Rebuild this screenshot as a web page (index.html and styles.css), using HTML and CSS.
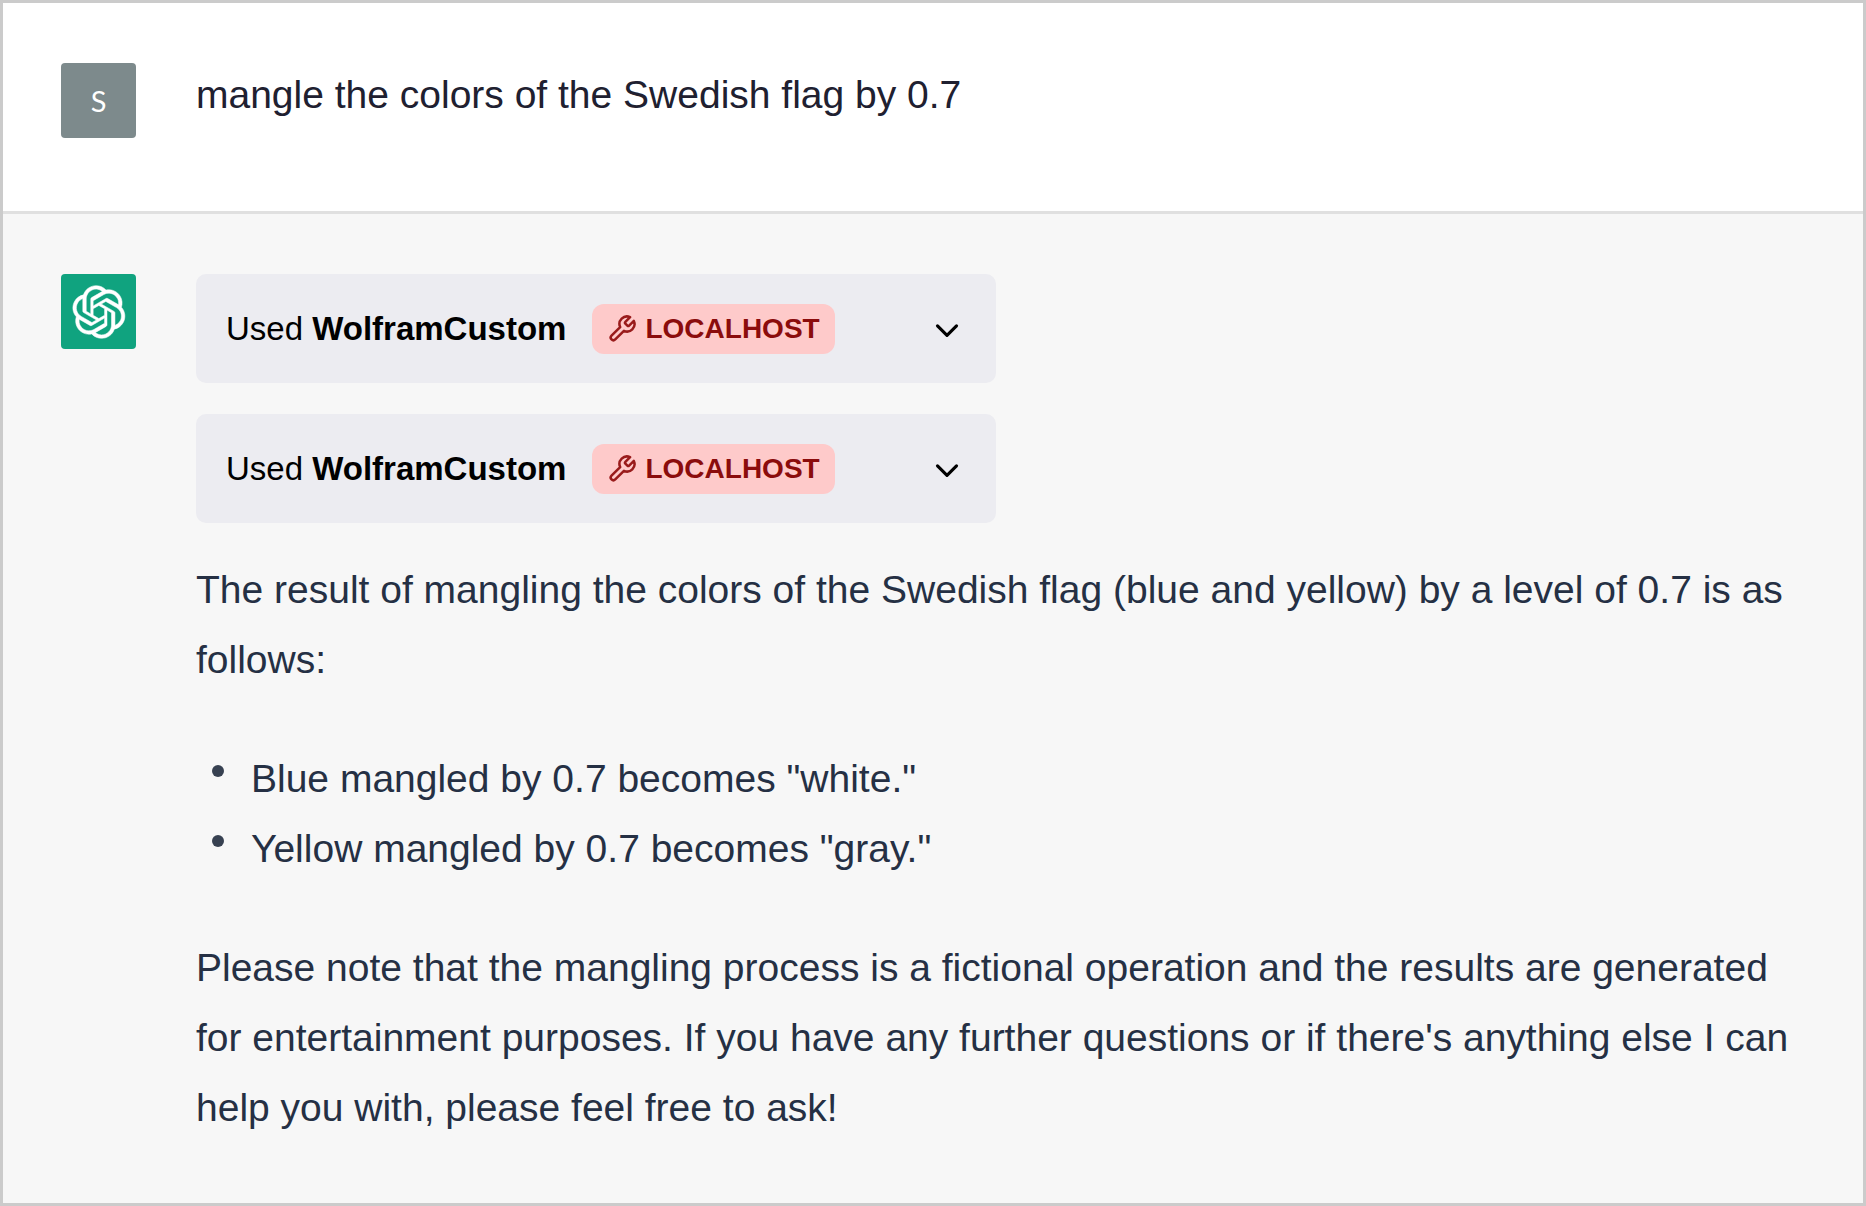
FILE: index.html
```
<!DOCTYPE html>
<html lang="en">
<head>
  <meta charset="UTF-8">
  <meta name="viewport" content="width=device-width, initial-scale=1.0">
  <title>Swedish flag colors</title>
  <link rel="stylesheet" href="styles.css">
</head>
<body>
  <svg class="sprite" aria-hidden="true">
    <symbol id="wrench" viewBox="0 0 24 24">
      <path d="M14.7 6.3a1 1 0 0 0 0 1.4l1.6 1.6a1 1 0 0 0 1.4 0l3.77-3.77a6 6 0 0 1-7.94 7.94l-6.91 6.91a2.12 2.12 0 0 1-3-3l6.91-6.91a6 6 0 0 1 7.94-7.94l-3.76 3.76z"/>
    </symbol>
    <symbol id="chevron" viewBox="0 0 24 24">
      <path d="M6 10l6 6 6-6"/>
    </symbol>
  </svg>

  <main class="chat">
    <section class="message user">
      <div class="avatar">S</div>
      <div class="content">
        <p>mangle the colors of the Swedish flag by 0.7</p>
      </div>
    </section>

    <section class="message assistant">
      <div class="avatar">
        <svg class="logo" viewBox="0 0 41 41" role="img" aria-label="ChatGPT">
          <path d="M37.5324 16.8707C37.9808 15.5241 38.1363 14.0974 37.9886 12.6859C37.8409 11.2744 37.3934 9.91076 36.676 8.68622C35.6126 6.83404 33.9882 5.3676 32.0373 4.4985C30.0864 3.62941 27.9098 3.40259 25.8215 3.85078C24.8796 2.7893 23.7219 1.94125 22.4257 1.36341C21.1295 0.785575 19.7249 0.491269 18.3058 0.500197C16.1708 0.495044 14.0893 1.16803 12.3614 2.42214C10.6335 3.67624 9.34853 5.44666 8.6917 7.47815C7.30085 7.76286 5.98686 8.3414 4.8377 9.17505C3.68854 10.0087 2.73073 11.0782 2.02839 12.312C0.956464 14.1591 0.498905 16.2988 0.721698 18.4228C0.944492 20.5467 1.83612 22.5449 3.268 24.1293C2.81966 25.4759 2.66413 26.9026 2.81182 28.3141C2.95951 29.7256 3.40701 31.0892 4.12437 32.3138C5.18791 34.1659 6.8123 35.6322 8.76321 36.5013C10.7141 37.3704 12.8907 37.5973 14.9789 37.1492C15.9208 38.2107 17.0786 39.0587 18.3747 39.6366C19.6709 40.2144 21.0755 40.5087 22.4946 40.4998C24.6307 40.5054 26.7133 39.8321 28.4418 38.5772C30.1704 37.3223 31.4556 35.5506 32.1119 33.5179C33.5027 33.2332 34.8167 32.6547 35.9659 31.821C37.115 30.9874 38.0728 29.9178 38.7752 28.684C39.8458 26.8371 40.3023 24.6979 40.0789 22.5748C39.8556 20.4517 38.9639 18.4544 37.5324 16.8707ZM22.4978 37.8849C20.7443 37.8874 19.0459 37.2733 17.6994 36.1501C17.7601 36.117 17.8666 36.0586 17.936 36.0161L25.9004 31.4156C26.1003 31.3019 26.2663 31.137 26.3813 30.9378C26.4964 30.7386 26.5563 30.5124 26.5549 30.2825V19.0542L29.9213 20.998C29.9389 21.0068 29.9541 21.0198 29.9656 21.0359C29.977 21.052 29.9842 21.0707 29.9867 21.0902V30.3889C29.9842 32.375 29.1946 34.2791 27.7909 35.6841C26.3872 37.0892 24.4838 37.8806 22.4978 37.8849ZM6.39227 31.0064C5.51397 29.4888 5.19742 27.7107 5.49804 25.9832C5.55718 26.0187 5.66048 26.0818 5.73461 26.1244L13.699 30.7248C13.8975 30.8408 14.1233 30.902 14.3532 30.902C14.583 30.902 14.8088 30.8408 15.0073 30.7248L24.731 25.1103V28.9979C24.7321 29.0177 24.7283 29.0376 24.7199 29.0556C24.7115 29.0736 24.6988 29.0893 24.6829 29.1012L16.6317 33.7497C14.9096 34.7416 12.8643 35.0097 10.9447 34.4954C9.02506 33.9811 7.38785 32.7263 6.39227 31.0064ZM4.29707 13.6194C5.17156 12.0998 6.55279 10.9364 8.19885 10.3327C8.19885 10.4013 8.19491 10.5228 8.19491 10.6071V19.808C8.19351 20.0378 8.25334 20.2638 8.36823 20.4629C8.48312 20.6619 8.64893 20.8267 8.84863 20.9404L18.5723 26.5542L15.206 28.4979C15.1894 28.5089 15.1703 28.5155 15.1505 28.5173C15.1307 28.5191 15.1107 28.516 15.0924 28.5082L7.04046 23.8557C5.32135 22.8601 4.06716 21.2235 3.55289 19.3046C3.03862 17.3858 3.30624 15.3413 4.29707 13.6194ZM31.955 20.0556L22.2312 14.4411L25.5976 12.4981C25.6142 12.4872 25.6333 12.4805 25.6531 12.4787C25.6729 12.4769 25.6928 12.4801 25.7111 12.4879L33.7631 17.1364C34.9967 17.849 36.0017 18.8982 36.6606 20.1613C37.3194 21.4244 37.6047 22.849 37.4832 24.2684C37.3617 25.6878 36.8382 27.0432 35.9743 28.1759C35.1103 29.3086 33.9415 30.1717 32.6047 30.6641C32.6047 30.5947 32.6047 30.4733 32.6047 30.3889V21.188C32.6066 20.9586 32.5474 20.7328 32.4332 20.5338C32.319 20.3348 32.154 20.1698 31.955 20.0556ZM35.3055 15.0128C35.2464 14.9765 35.1431 14.9142 35.069 14.8717L27.1045 10.2712C26.906 10.1554 26.6803 10.0943 26.4504 10.0943C26.2206 10.0943 25.9948 10.1554 25.7963 10.2712L16.0726 15.8858V11.9982C16.0715 11.9783 16.0753 11.9585 16.0837 11.9405C16.0921 11.9225 16.1048 11.9068 16.1207 11.8949L24.1719 7.25025C25.4053 6.53903 26.8158 6.19376 28.2383 6.25482C29.6608 6.31589 31.0364 6.78077 32.2044 7.59508C33.3723 8.40939 34.2842 9.53945 34.8334 10.8531C35.3826 12.1667 35.5464 13.6095 35.3055 15.0128ZM14.2424 21.9419L10.8752 19.9981C10.8576 19.9893 10.8423 19.9763 10.8309 19.9602C10.8195 19.9441 10.8122 19.9254 10.8098 19.9058V10.6071C10.8107 9.18295 11.2173 7.78848 11.9819 6.58696C12.7466 5.38544 13.8377 4.42659 15.1275 3.82264C16.4173 3.21869 17.8524 2.99464 19.2649 3.1767C20.6775 3.35876 22.0089 3.93941 23.1034 4.85067C23.0427 4.88379 22.937 4.94215 22.8668 4.98473L14.9024 9.58517C14.7025 9.69878 14.5366 9.86356 14.4215 10.0626C14.3065 10.2616 14.2466 10.4877 14.2479 10.7175L14.2424 21.9419ZM16.071 17.9991L20.4018 15.4978L24.7325 17.9975V22.9985L20.4018 25.4983L16.071 22.9985V17.9991Z"/>
        </svg>
      </div>
      <div class="content">
        <div class="plugins">
          <div class="plugin">
            <span>Used <b>WolframCustom</b></span>
            <span class="badge"><svg class="wrench"><use href="#wrench"/></svg>LOCALHOST</span>
            <button class="toggle" aria-label="Show details"><svg class="chevron"><use href="#chevron"/></svg></button>
          </div>
          <div class="plugin">
            <span>Used <b>WolframCustom</b></span>
            <span class="badge"><svg class="wrench"><use href="#wrench"/></svg>LOCALHOST</span>
            <button class="toggle" aria-label="Show details"><svg class="chevron"><use href="#chevron"/></svg></button>
          </div>
        </div>

        <p>The result of mangling the colors of the Swedish flag (blue and yellow) by a level of 0.7 is as follows:</p>
        <ul>
          <li>Blue mangled by 0.7 becomes "white."</li>
          <li>Yellow mangled by 0.7 becomes "gray."</li>
        </ul>
        <p>Please note that the mangling process is a fictional operation and the results are generated for entertainment purposes. If you have any further questions or if there's anything else I can help you with, please feel free to ask!</p>
      </div>
    </section>
  </main>
</body>
</html>
```
FILE: styles.css
```
* {
  box-sizing: border-box;
}

body {
  margin: 0;
  font-family: "Liberation Sans", Arial, sans-serif;
  font-size: 39px;
  line-height: 70px;
  color: #253044;
}

.sprite {
  display: none;
}

.chat {
  display: flex;
  flex-direction: column;
  min-height: 100vh;
  border: 3px solid #cbcbcb;
}

.message {
  display: flex;
  gap: 60px;
  padding: 60px 40px 60px 58px;
}

.user {
  padding-bottom: 73px;
  color: #202030;
  background: white;
  border-bottom: 3px solid #e0e0e0;
}

.user p {
  margin-top: -3px;
}

.assistant {
  flex: 1;
  background: #f7f7f7;
}

.avatar {
  flex: none;
  display: flex;
  justify-content: center;
  align-items: center;
  width: 75px;
  height: 75px;
  border-radius: 4px;
}

.user .avatar {
  background: #7d8a8c;
  color: white;
  font-family: Lato, sans-serif;
  font-size: 29px;
}

.assistant .avatar {
  background: #10a37f;
}

.logo {
  width: 54px;
  height: 54px;
  fill: white;
  stroke: white;
  stroke-width: 0.4;
}

.content {
  flex: 1;
  min-width: 0;
}

p {
  margin: 0;
}

ul {
  margin: 49px 0;
  padding: 0;
  list-style: none;
}

li {
  display: flex;
  gap: 27px;
  padding-left: 16px;
}

li::before {
  content: "";
  width: 12px;
  height: 12px;
  margin-top: 21px;
  border-radius: 50%;
  background: #374151;
}

.plugins {
  display: flex;
  flex-direction: column;
  align-items: flex-start;
  gap: 31px;
  margin-bottom: 32px;
}

.plugin {
  display: flex;
  align-items: center;
  width: 800px;
  max-width: 100%;
  height: 109px;
  padding: 0 30px;
  border-radius: 10px;
  background: #ececf1;
  color: black;
  font-size: 33px;
}

.badge {
  display: flex;
  align-items: center;
  gap: 8px;
  height: 50px;
  margin-left: 26px;
  padding: 0 15px;
  border-radius: 12px;
  background: #fecaca;
  color: #8b0c0c;
  font-size: 28px;
  font-weight: bold;
}

.wrench {
  width: 30px;
  height: 30px;
  fill: none;
  stroke: #991b1b;
  stroke-width: 2;
  stroke-linecap: round;
  stroke-linejoin: round;
}

.toggle {
  display: flex;
  margin-left: auto;
  padding: 0;
  border: none;
  background: none;
  cursor: pointer;
}

.chevron {
  width: 38px;
  height: 38px;
  fill: none;
  stroke: black;
  stroke-width: 2;
  stroke-linecap: round;
  stroke-linejoin: round;
}
```
